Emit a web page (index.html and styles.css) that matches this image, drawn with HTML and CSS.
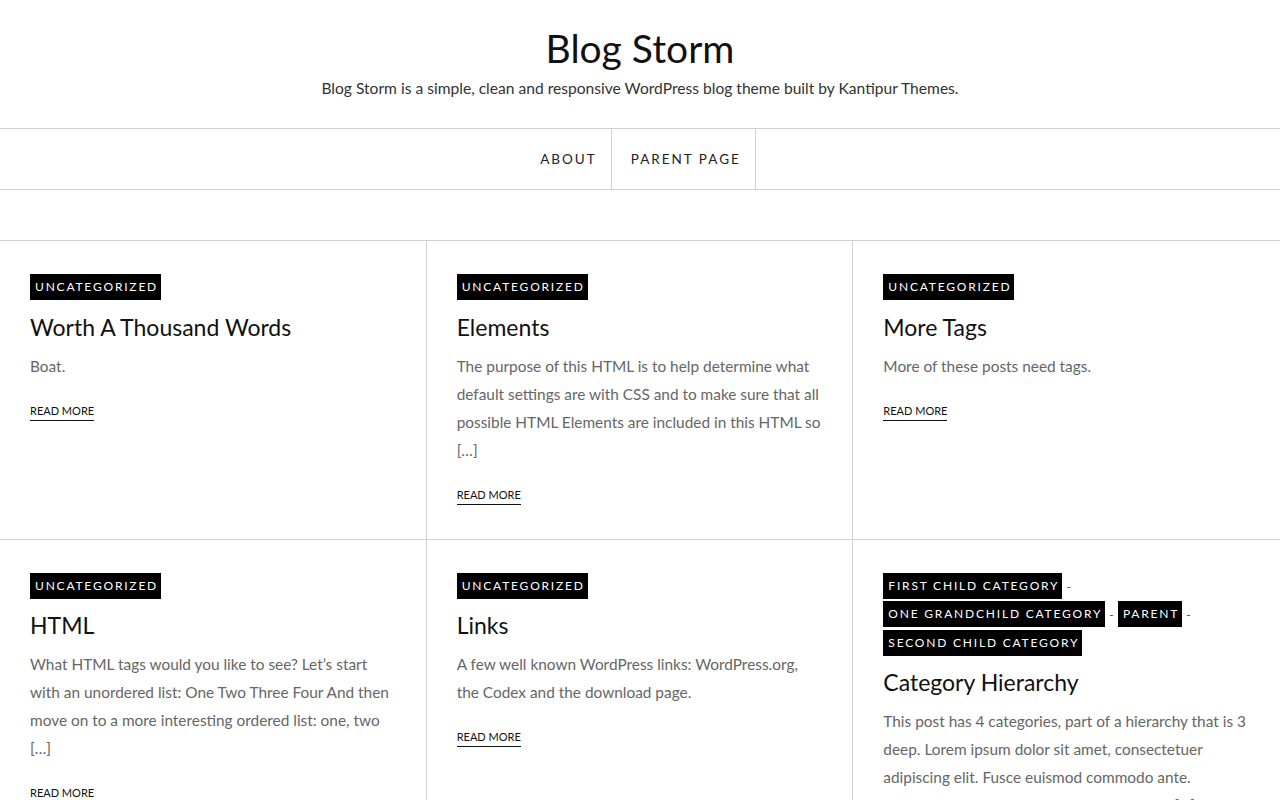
FILE: index.html
```html
<!DOCTYPE html>
<html lang="en">
<head>
<meta charset="utf-8">
<title>Blog Storm</title>
<link rel="stylesheet" href="styles.css">
</head>
<body>
<header class="site-header">
  <h1 class="site-title">Blog Storm</h1>
  <p class="site-desc">Blog Storm is a simple, clean and responsive WordPress blog theme built by Kantipur Themes.</p>
</header>
<nav class="main-nav">
  <ul class="menu">
    <li class="menu-item"><a href="#">About</a></li>
    <li class="menu-item"><a href="#">Parent Page</a></li>
  </ul>
</nav>
<main class="posts">
  <article class="post">
    <div class="cats"><a class="cat" href="#">Uncategorized</a></div>
    <h2 class="post-title">Worth A Thousand Words</h2>
    <p class="excerpt">Boat.</p>
    <a class="more" href="#">Read More</a>
  </article>
  <article class="post">
    <div class="cats"><a class="cat" href="#">Uncategorized</a></div>
    <h2 class="post-title">Elements</h2>
    <p class="excerpt">The purpose of this HTML is to help determine what default settings are with CSS and to make sure that all possible HTML Elements are included in this HTML so […]</p>
    <a class="more" href="#">Read More</a>
  </article>
  <article class="post">
    <div class="cats"><a class="cat" href="#">Uncategorized</a></div>
    <h2 class="post-title">More Tags</h2>
    <p class="excerpt">More of these posts need tags.</p>
    <a class="more" href="#">Read More</a>
  </article>
  <article class="post">
    <div class="cats"><a class="cat" href="#">Uncategorized</a></div>
    <h2 class="post-title">HTML</h2>
    <p class="excerpt">What HTML tags would you like to see? Let’s start with an unordered list: One Two Three Four And then move on to a more interesting ordered list: one, two […]</p>
    <a class="more" href="#">Read More</a>
  </article>
  <article class="post">
    <div class="cats"><a class="cat" href="#">Uncategorized</a></div>
    <h2 class="post-title">Links</h2>
    <p class="excerpt">A few well known WordPress links: WordPress.org, the Codex and the download page.</p>
    <a class="more" href="#">Read More</a>
  </article>
  <article class="post">
    <div class="cats"><a class="cat" href="#">First Child Category</a> <span class="sep">-</span> <a class="cat" href="#">One Grandchild Category</a> <span class="sep">-</span> <a class="cat" href="#">Parent</a> <span class="sep">-</span> <a class="cat" href="#">Second Child Category</a></div>
    <h2 class="post-title">Category Hierarchy</h2>
    <p class="excerpt">This post has 4 categories, part of a hierarchy that is 3 deep. Lorem ipsum dolor sit amet, consectetuer adipiscing elit. Fusce euismod commodo ante. Suspendisse potenti. Nunc accumsan lacus […]</p>
    <a class="more" href="#">Read More</a>
  </article>
</main>
</body>
</html>
```
FILE: styles.css
```css
* { box-sizing: border-box; }
html, body { margin: 0; padding: 0; }
body {
  font-family: Lato, "Liberation Sans", sans-serif;
  color: #111;
  background: #fff;
}
a { color: inherit; text-decoration: none; }

.site-header {
  text-align: center;
  padding: 24px 0 28px;
}
.site-title {
  margin: 0;
  font-size: 39px;
  font-weight: 400;
  line-height: 48px;
  color: #111;
}
.site-desc {
  margin: 4px 0 0;
  font-size: 15.6px;
  line-height: 24px;
  color: #333;
  font-weight: 400;
}

.main-nav {
  border-top: 1px solid #d0d0d0;
  border-bottom: 1px solid #d0d0d0;
  display: flex;
  justify-content: center;
  margin-bottom: 50px;
}
.menu {
  list-style: none;
  margin: 0;
  padding: 0;
  display: flex;
}
.menu-item {
  border-right: 1px solid #d0d0d0;
}
.menu-item a {
  display: block;
  padding: 1px 14px 0 16px;
  line-height: 59px;
  font-size: 13.5px;
  letter-spacing: 2px;
  text-transform: uppercase;
  color: #222;
}
.menu-item + .menu-item a { padding-left: 19px; }

.posts {
  display: grid;
  grid-template-columns: repeat(3, 1fr);
  border-top: 1px solid #d0d0d0;
}
.post {
  padding: 33px 29px 34px 30px;
  border-right: 1px solid #d0d0d0;
  border-bottom: 1px solid #d0d0d0;
}
.post:nth-child(3n) { border-right: 0; }

.cats {
  font-size: 12px;
  line-height: 28.5px;
  color: #333;
}
.cat {
  display: inline-block;
  background: #000;
  color: #fff;
  text-transform: uppercase;
  letter-spacing: 1.8px;
  padding: 0 3px 0 5px;
  line-height: 26px;
  vertical-align: top;
}
.sep { color: #444; margin: 0 1px; }

.post-title {
  margin: 9px 0 0;
  font-size: 23px;
  font-weight: 400;
  line-height: 30px;
  color: #111;
}
.cats + .post-title { }
.excerpt {
  margin: 10px 0 0;
  font-size: 15.4px;
  line-height: 28px;
  color: #666;
  font-weight: 400;
}
.more {
  display: inline-block;
  margin-top: 23px;
  font-size: 11px;
  text-transform: uppercase;
  color: #111;
  line-height: 16px;
  padding-bottom: 1px;
  border-bottom: 1px solid #111;
}
```
